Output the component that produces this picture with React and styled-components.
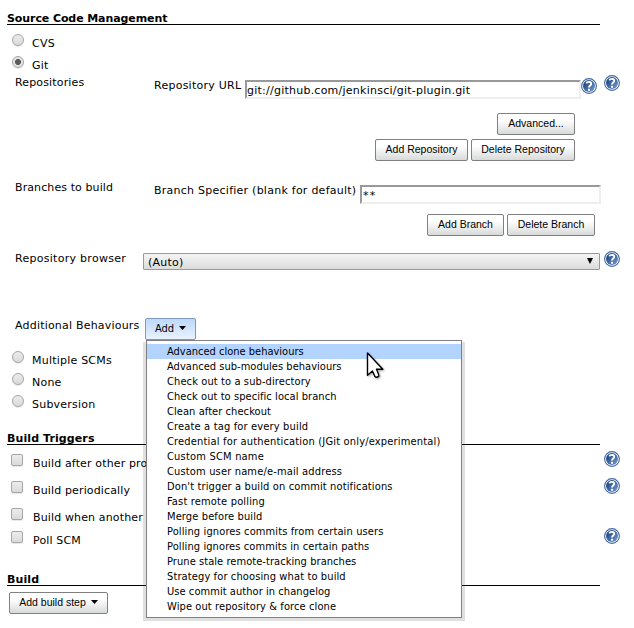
import React from "react";
import styled, { createGlobalStyle } from "styled-components";

const GlobalStyle = createGlobalStyle`
  html, body { margin: 0; background: #fff; overflow: hidden; }
  * { box-sizing: border-box; }
  body { font-family: "DejaVu Sans", Verdana, sans-serif; font-size: 11px; color: #000; }
`;

const Page = styled.main`
  width: 634px;
  height: 628px;
  display: flex;
  flex-direction: column;
  padding-left: 7px;
  letter-spacing: 0.22px;
`;

const SectionHeader = styled.h2`
  flex: none;
  width: 593px;
  height: 15px;
  margin: ${(p) => p.$top}px 0 ${(p) => p.$bottom}px;
  border-bottom: 1px solid #000;
  font-size: 11px;
  font-weight: bold;
  letter-spacing: ${(p) => p.$tracking || 0}px;
  line-height: 17px;
`;

const OptionRow = styled.label`
  flex: none;
  display: flex;
  align-items: flex-start;
  width: 613px;
  height: ${(p) => p.$height || 22}px;
  padding-left: ${(p) => (p.$check ? 4 : 5)}px;
  line-height: 24px;
  white-space: nowrap;
`;

const OptionText = styled.span`
  flex: 1;
  margin-left: ${(p) => (p.$check ? 10 : 8)}px;
  letter-spacing: ${(p) => (p.$check ? 0.14 : 0.22)}px;
`;

const Radio = styled.span`
  width: 12px;
  height: 12px;
  margin-top: 2px;
  border: 1px solid #a6a6a6;
  border-radius: 50%;
  background: ${(p) => (p.$on ? "radial-gradient(circle, #5a5a5a 0 2.6px, #e4e4e4 3.4px)" : "linear-gradient(#ececec, #dadada)")};
  box-shadow: 0 1px 1px rgba(0, 0, 0, 0.1);
`;

const Checkbox = styled.span`
  width: 12px;
  height: 12px;
  margin-top: 2px;
  border: 1px solid #a6a6a6;
  border-radius: 2px;
  background: linear-gradient(#ececec, #dadada);
  box-shadow: 0 1px 1px rgba(0, 0, 0, 0.1);
`;

const FieldRow = styled.div`
  flex: none;
  display: flex;
  align-items: flex-start;
  width: 613px;
  height: ${(p) => p.$height}px;
  padding-left: 8px;
  line-height: 14px;
  white-space: nowrap;
`;

const FieldName = styled.div`
  flex: none;
  width: ${(p) => p.$width}px;
  letter-spacing: ${(p) => p.$tracking || 0.15}px;
`;

const FieldLabel = styled.label`
  flex: none;
  width: ${(p) => p.$width}px;
  margin-top: 3px;
  letter-spacing: 0.25px;
`;

const TextInput = styled.input`
  width: ${(p) => p.$width}px;
  height: 19px;
  margin: 4px 0 0;
  padding: 1px 0 0 ${(p) => p.$indent || 0}px;
  border: 2px solid;
  border-color: #999 #eee #eee #999;
  background: #fff;
  font: 11px "DejaVu Sans", sans-serif;
  letter-spacing: ${(p) => p.$tracking}px;
  outline: none;
`;

const SelectBox = styled.div`
  display: flex;
  justify-content: space-between;
  width: 457px;
  height: 17px;
  margin-top: 1px;
  padding: 1px 6px 0 4px;
  border: 1px solid #999;
  border-radius: 1px;
  background: linear-gradient(#f5f5f5, #dcdcdc);
  line-height: 16px;
`;

const SelectArrow = styled.svg`
  width: 6px;
  height: 6px;
  margin-top: 3px;
`;

const HelpSlot = styled.span`
  flex: none;
  width: 16px;
  height: 16px;
  margin-top: ${(p) => p.$top || 0}px;
  margin-left: ${(p) => (p.$push ? "auto" : "0")};
`;

const HelpIcon = styled.svg`
  display: block;
  width: 16px;
  height: 16px;
`;

const ButtonRow = styled.div`
  flex: none;
  display: flex;
  justify-content: ${(p) => (p.$start ? "flex-start" : "flex-end")};
  gap: 3px;
  width: ${(p) => p.$width}px;
  height: ${(p) => p.$height}px;
  padding-left: ${(p) => (p.$start ? 2 : 0)}px;
`;

const Button = styled.button`
  display: flex;
  align-items: center;
  justify-content: center;
  gap: 5px;
  width: ${(p) => p.$width}px;
  height: 22px;
  padding: 0 0 2px;
  border: 1px solid ${(p) => (p.$active ? "#7d98b8" : "#808080")};
  border-radius: 2px;
  background: ${(p) => (p.$active ? "linear-gradient(#bdd8fc, #e9f2ff)" : "linear-gradient(#fff 30%, #d8dada)")};
  color: #000;
  font: ${(p) => (p.$active ? '11px "DejaVu Sans Condensed", "DejaVu Sans"' : '10.5px "Liberation Sans", Arial')}, sans-serif;
  font-stretch: ${(p) => (p.$active ? "condensed" : "normal")};
  white-space: nowrap;
`;

const MenuAnchor = styled.div`
  position: relative;
  margin-top: -1px;
`;

const MenuShadow = styled.div`
  position: absolute;
  z-index: 1;
  top: 24px;
  left: -2px;
  width: 322px;
  height: 279px;
  background: rgba(0, 0, 0, 0.12);
`;

const Menu = styled.ul`
  position: absolute;
  z-index: 2;
  top: 22px;
  left: 1px;
  width: 316px;
  height: 278px;
  margin: 0;
  padding: 3px 0;
  border: 1px solid #808080;
  background: #fff;
  list-style: none;
`;

const MenuItem = styled.li`
  height: 15px;
  padding-left: 20px;
  background: ${(p) => (p.$active ? "#b3d4ff" : "transparent")};
  font-family: "DejaVu Sans Condensed", "DejaVu Sans", sans-serif;
  font-stretch: condensed;
  font-size: 11px;
  letter-spacing: ${(p) => p.$tracking}px;
  line-height: 15px;
`;

const Pointer = styled.svg`
  position: absolute;
  z-index: 3;
  left: 221px;
  top: 33px;
  width: 21px;
  height: 30px;
  filter: drop-shadow(1px 1px 1px rgba(0, 0, 0, 0.35));
`;

function Help({ top, push }) {
  return (
    <HelpSlot $top={top} $push={push}>
      <HelpIcon viewBox="0 0 16 16">
        <defs>
          <linearGradient id="help" x1="0" y1="0" x2="1" y2="1">
            <stop offset="0.2" stopColor="#204a87" />
            <stop offset="1" stopColor="#7aa0d0" />
          </linearGradient>
        </defs>
        <circle cx="8" cy="8" r="7.4" fill="#fff" stroke="#4468a0" strokeWidth="1.1" />
        <circle cx="8" cy="8" r="6" fill="url(#help)" />
        <path d="M5.3 5.4C6.2 3.3 10.6 3.4 10.2 6C9.9 7.7 8 7.4 8 9.6M8 10.8V12.8" fill="none" stroke="#fff" strokeWidth="1.9" />
      </HelpIcon>
    </HelpSlot>
  );
}

function Caret() {
  return (
    <svg width="7" height="4" viewBox="0 0 7 4">
      <path d="M0 0H7L3.5 4Z" />
    </svg>
  );
}

const behaviours = [
  ["Advanced clone behaviours", 0],
  ["Advanced sub-modules behaviours", 0.03],
  ["Check out to a sub-directory", 0.11],
  ["Check out to specific local branch", 0.07],
  ["Clean after checkout", 0.07],
  ["Create a tag for every build", 0.16],
  ["Credential for authentication (JGit only/experimental)", 0.18],
  ["Custom SCM name", 0.2],
  ["Custom user name/e-mail address", 0.16],
  ["Don't trigger a build on commit notifications", 0.13],
  ["Fast remote polling", 0.17],
  ["Merge before build", 0.12],
  ["Polling ignores commits from certain users", 0.12],
  ["Polling ignores commits in certain paths", 0.1],
  ["Prune stale remote-tracking branches", 0.06],
  ["Strategy for choosing what to build", 0.12],
  ["Use commit author in changelog", 0.06],
  ["Wipe out repository & force clone", 0.1],
];

const triggers = [
  { text: "Build after other pro", height: 27, help: true },
  { text: "Build periodically", height: 27, help: true },
  { text: "Build when another", height: 23 },
  { text: "Poll SCM", height: 22, help: true },
];

function ScmOption({ text, on }) {
  return (
    <OptionRow>
      <Radio $on={on} />
      <OptionText>{text}</OptionText>
    </OptionRow>
  );
}

export default function App() {
  return (
    <>
      <GlobalStyle />
      <Page>
        <SectionHeader $top={10} $bottom={7} $tracking={-0.09}>Source Code Management</SectionHeader>
        <ScmOption text="CVS" />
        <ScmOption text="Git" on />

        <FieldRow $height={37}>
          <FieldName $width={139}>Repositories</FieldName>
          <FieldLabel $width={91}>Repository URL</FieldLabel>
          <TextInput $width={336} $tracking={0.24} defaultValue="git://github.com/jenkinsci/git-plugin.git" />
          <Help top={2} />
          <Help top={-1} push />
        </FieldRow>
        <ButtonRow $width={568} $height={26}>
          <Button $width={78}>Advanced...</Button>
        </ButtonRow>
        <ButtonRow $width={568} $height={42}>
          <Button $width={93}>Add Repository</Button>
          <Button $width={104}>Delete Repository</Button>
        </ButtonRow>

        <FieldRow $height={33}>
          <FieldName $width={139} $tracking={0.1}>Branches to build</FieldName>
          <FieldLabel $width={206}>Branch Specifier (blank for default)</FieldLabel>
          <TextInput $width={241} $indent={1} $tracking={1.2} defaultValue="**" />
        </FieldRow>
        <ButtonRow $width={588} $height={38}>
          <Button $width={77}>Add Branch</Button>
          <Button $width={88}>Delete Branch</Button>
        </ButtonRow>

        <FieldRow $height={67}>
          <FieldName $width={128} $tracking={0.28}>Repository browser</FieldName>
          <SelectBox>
            <span>(Auto)</span>
            <SelectArrow viewBox="0 0 6 6"><path d="M0 0H6L3 6Z" /></SelectArrow>
          </SelectBox>
          <Help top={-1} push />
        </FieldRow>

        <FieldRow $height={30}>
          <FieldName $width={130} $tracking={0.2}>Additional Behaviours</FieldName>
          <MenuAnchor>
            <Button $width={51} $active>Add <Caret /></Button>
            <MenuShadow />
            <Menu>
              {behaviours.map(([name, tracking], i) => (
                <MenuItem key={name} $active={i === 0} $tracking={tracking}>{name}</MenuItem>
              ))}
            </Menu>
            <Pointer viewBox="0 0 21 30">
              <path d="M1.5 2V24.2L6.4 20L9 25.6Q10.6 27 12.8 25.2Q13.2 24.4 10.5 18.2H16.8Z" fill="#fff" stroke="#000" strokeWidth="1.4" strokeLinejoin="round" />
            </Pointer>
          </MenuAnchor>
        </FieldRow>

        <ScmOption text="Multiple SCMs" />
        <ScmOption text="None" />
        <ScmOption text="Subversion" />

        <SectionHeader $top={15} $bottom={7} $tracking={0.1}>Build Triggers</SectionHeader>
        {triggers.map((t) => (
          <OptionRow key={t.text} $check $height={t.height}>
            <Checkbox />
            <OptionText $check>{t.text}</OptionText>
            {t.help && <Help top={-1} />}
          </OptionRow>
        ))}

        <SectionHeader $top={20} $bottom={6} $tracking={0.1}>Build</SectionHeader>
        <ButtonRow $start $width={101} $height={22}>
          <Button $width={99}>Add build step <Caret /></Button>
        </ButtonRow>
      </Page>
    </>
  );
}
